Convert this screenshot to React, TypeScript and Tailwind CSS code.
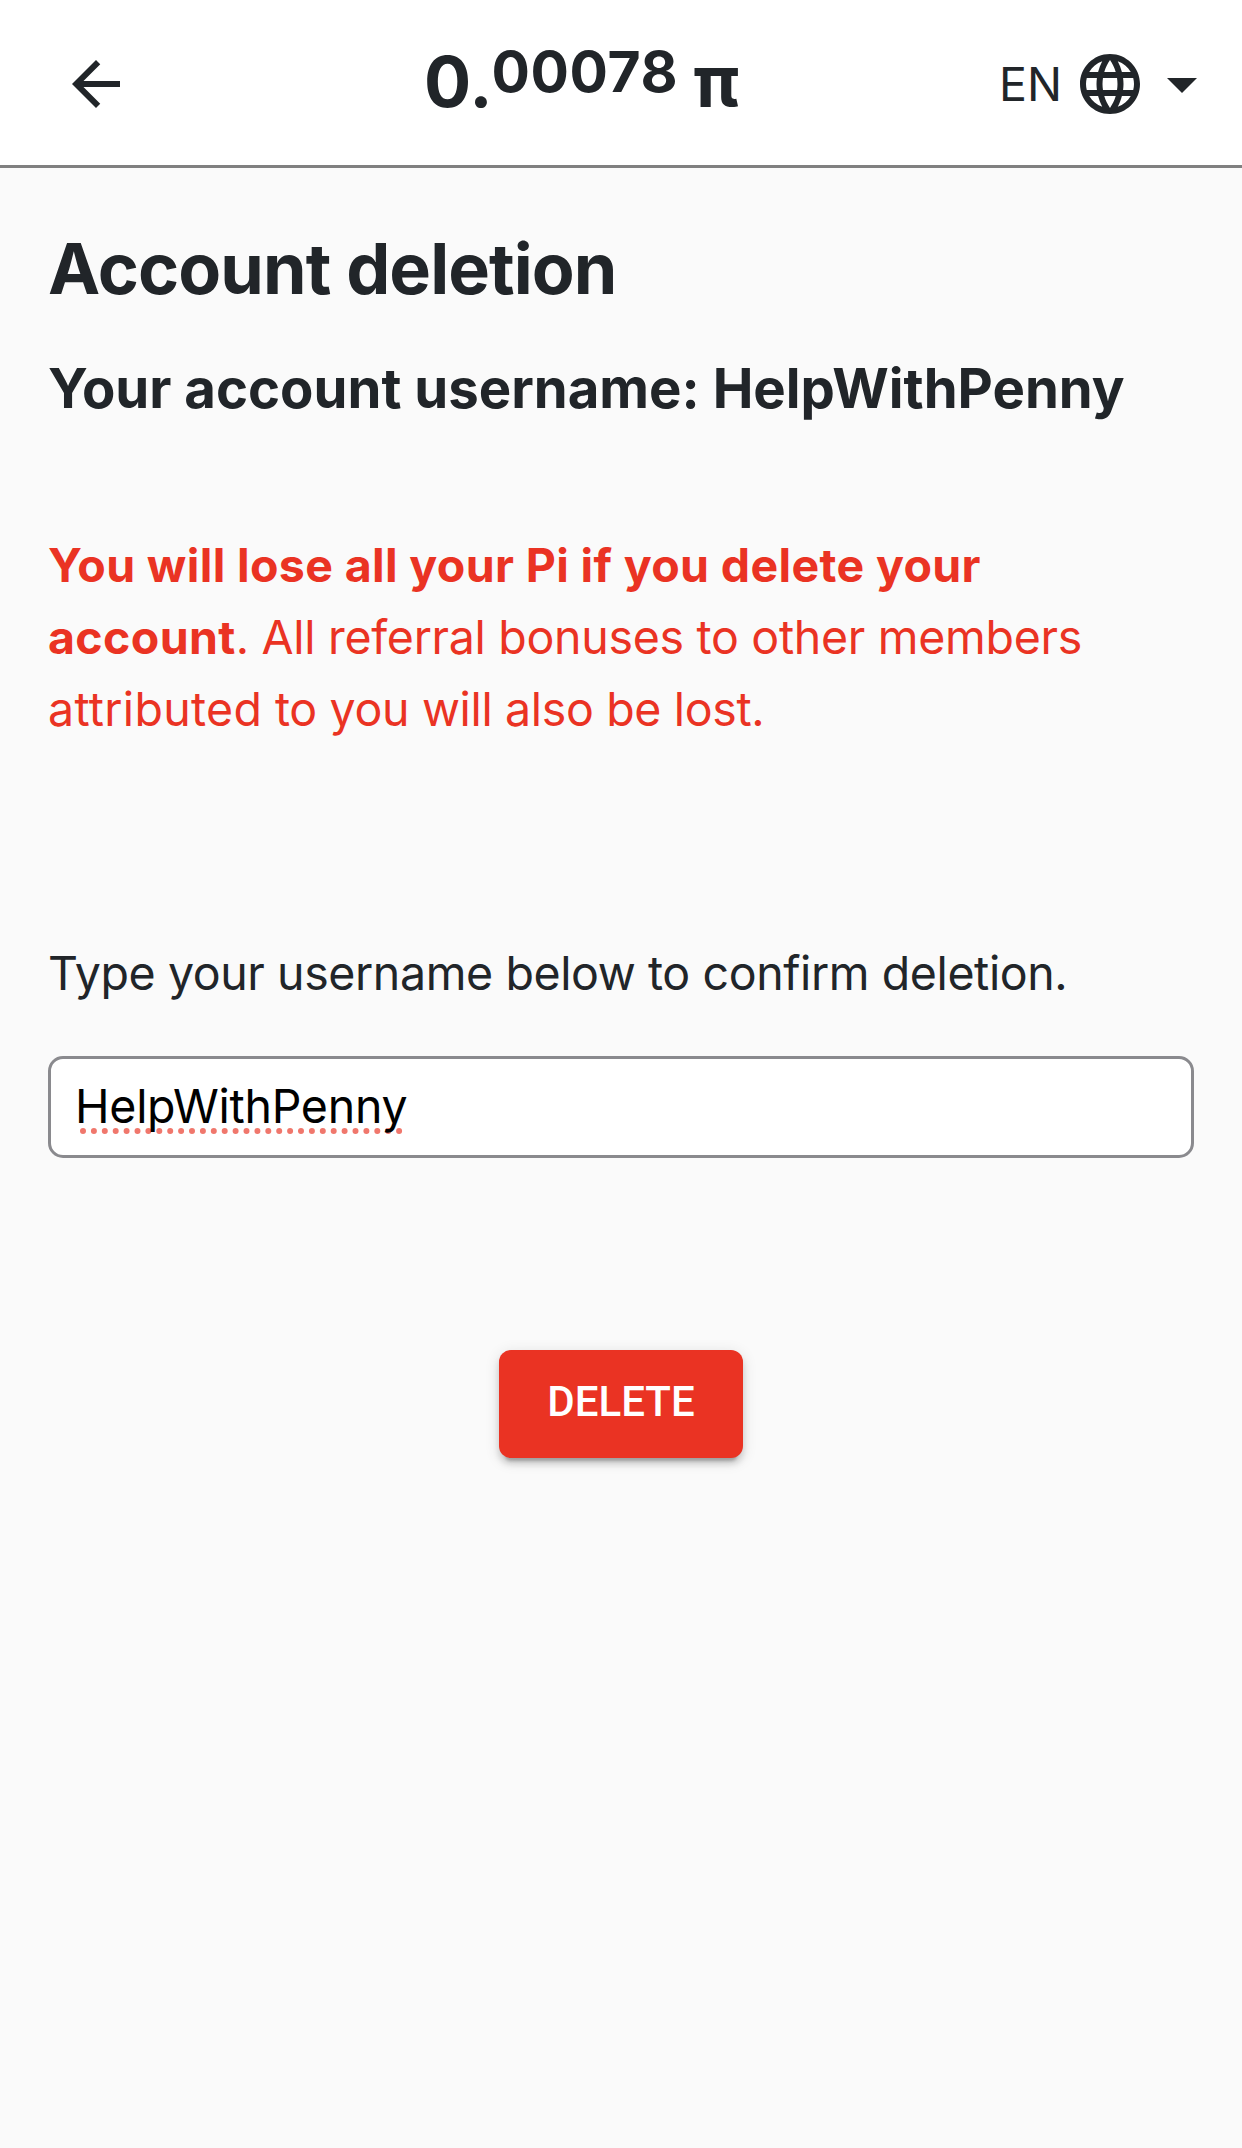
import { useState } from 'react'

function ArrowBackIcon() {
  return (
    <svg viewBox="0 0 24 24" className="size-[72px] fill-current" aria-hidden="true">
      <path d="M20 11H7.83l5.59-5.59L12 4l-8 8 8 8 1.41-1.41L7.83 13H20v-2z" />
    </svg>
  )
}

function LanguageIcon() {
  return (
    <svg viewBox="0 0 24 24" className="size-[72px] fill-current" aria-hidden="true">
      <path d="M11.99 2C6.47 2 2 6.48 2 12s4.47 10 9.99 10C17.52 22 22 17.52 22 12S17.52 2 11.99 2zm6.93 6h-2.95c-.32-1.25-.78-2.45-1.38-3.56 1.84.63 3.37 1.91 4.33 3.56zM12 4.04c.83 1.2 1.48 2.53 1.91 3.96h-3.82c.43-1.43 1.08-2.76 1.91-3.96zM4.26 14C4.1 13.36 4 12.69 4 12s.1-1.36.26-2h3.38c-.08.66-.14 1.32-.14 2 0 .68.06 1.34.14 2H4.26zm.82 2h2.95c.32 1.25.78 2.45 1.38 3.56-1.84-.63-3.37-1.9-4.33-3.56zm2.95-8H5.08c.96-1.66 2.49-2.93 4.33-3.56C8.81 5.55 8.35 6.75 8.03 8zM12 19.96c-.83-1.2-1.48-2.53-1.91-3.96h3.82c-.43 1.43-1.08 2.76-1.91 3.96zM14.34 14H9.66c-.09-.66-.16-1.32-.16-2 0-.68.07-1.35.16-2h4.68c.09.65.16 1.32.16 2 0 .68-.07 1.34-.16 2zm.25 5.56c.6-1.11 1.06-2.31 1.38-3.56h2.95c-.96 1.65-2.49 2.93-4.33 3.56zM16.36 14c.08-.66.14-1.32.14-2 0-.68-.06-1.34-.14-2h3.38c.16.64.26 1.31.26 2s-.1 1.36-.26 2h-3.38z" />
    </svg>
  )
}

function ArrowDropDownIcon() {
  return (
    <svg viewBox="0 0 24 24" className="size-[72px] fill-current" aria-hidden="true">
      <path d="M7 10l5 5 5-5z" />
    </svg>
  )
}

function Header() {
  return (
    <header className="flex h-[168px] items-center border-b-[3px] border-[#808080] bg-white pl-[60px] pr-6">
      <button aria-label="Back" className="mt-[3px]">
        <ArrowBackIcon />
      </button>
      <div className="mb-[2px] ml-[292px] flex items-baseline whitespace-nowrap text-[70px] leading-[84px] font-bold">
        <span>0.</span>
        <span className="relative -top-[15px] -ml-px text-[57px] leading-none tracking-[0.6px]">00078</span>
        <span className="ml-[15px] text-[72px] leading-none">π</span>
      </div>
      <button className="mt-[3px] ml-auto flex items-center">
        <span className="mr-[12px] text-[46.5px] leading-[72px] font-normal">EN</span>
        <LanguageIcon />
        <ArrowDropDownIcon />
      </button>
    </header>
  )
}

function UsernameField() {
  const [value, setValue] = useState('HelpWithPenny')
  return (
    <div className="relative mt-[47px] h-[102px] rounded-[15px] border-[3px] border-[#8a8a8e] bg-white">
      {value === 'HelpWithPenny' && (
        <svg className="absolute top-[69px] left-[28px] h-[6px] w-[330px]" viewBox="0 0 330 6" aria-hidden="true">
          <line x1="4" y1="3" x2="321" y2="3" stroke="#f0776c" strokeWidth="6" strokeLinecap="round" strokeDasharray="0 10.9" />
        </svg>
      )}
      <input
        aria-label="Username"
        spellCheck={false}
        value={value}
        onChange={(e) => setValue(e.target.value)}
        className="relative block h-full w-full bg-transparent px-6 pb-[2px] text-[46.5px] tracking-[-0.27px] text-black outline-none"
      />
    </div>
  )
}

export default function App() {
  return (
    <div className="min-h-[2148px] w-full bg-[#fafafa] font-['Inter',sans-serif] text-[#212529]">
      <Header />
      <main className="flex flex-col px-12 pt-[59px]">
        <h1 className="text-[70px] leading-[84px] font-bold tracking-[-0.9px]">Account deletion</h1>
        <h2 className="mt-[44px] text-[54.5px] leading-[66px] font-bold whitespace-nowrap">
          Your account username: HelpWithPenny
        </h2>
        <p className="mt-[108px] text-[46.5px] leading-[72px] text-[#ea3323]">
          <strong className="font-bold tracking-[0.36px]">
            You will lose all your Pi if you delete your
            <br />
            account
          </strong>
          <span className="tracking-[-0.3px]">. All referral bonuses to other members</span>
          <br />
          <span className="tracking-[0.3px]">attributed</span>
          <span className="tracking-[-0.35px]"> to you will also be lost.</span>
        </p>
        <p className="mt-[192px] text-[46.5px] leading-[72px] tracking-[-0.4px]">
          Type your username below to confirm deletion.
        </p>
        <UsernameField />
        <button className="mt-[192px] h-[108px] w-[244px] self-center rounded-xl bg-[#ea3323] pb-[5px] font-['Roboto',sans-serif] text-[42px] font-medium text-white shadow-[0_9px_3px_-6px_rgba(0,0,0,0.2),0_6px_6px_0_rgba(0,0,0,0.14),0_3px_15px_0_rgba(0,0,0,0.12)]">
          DELETE
        </button>
      </main>
    </div>
  )
}
